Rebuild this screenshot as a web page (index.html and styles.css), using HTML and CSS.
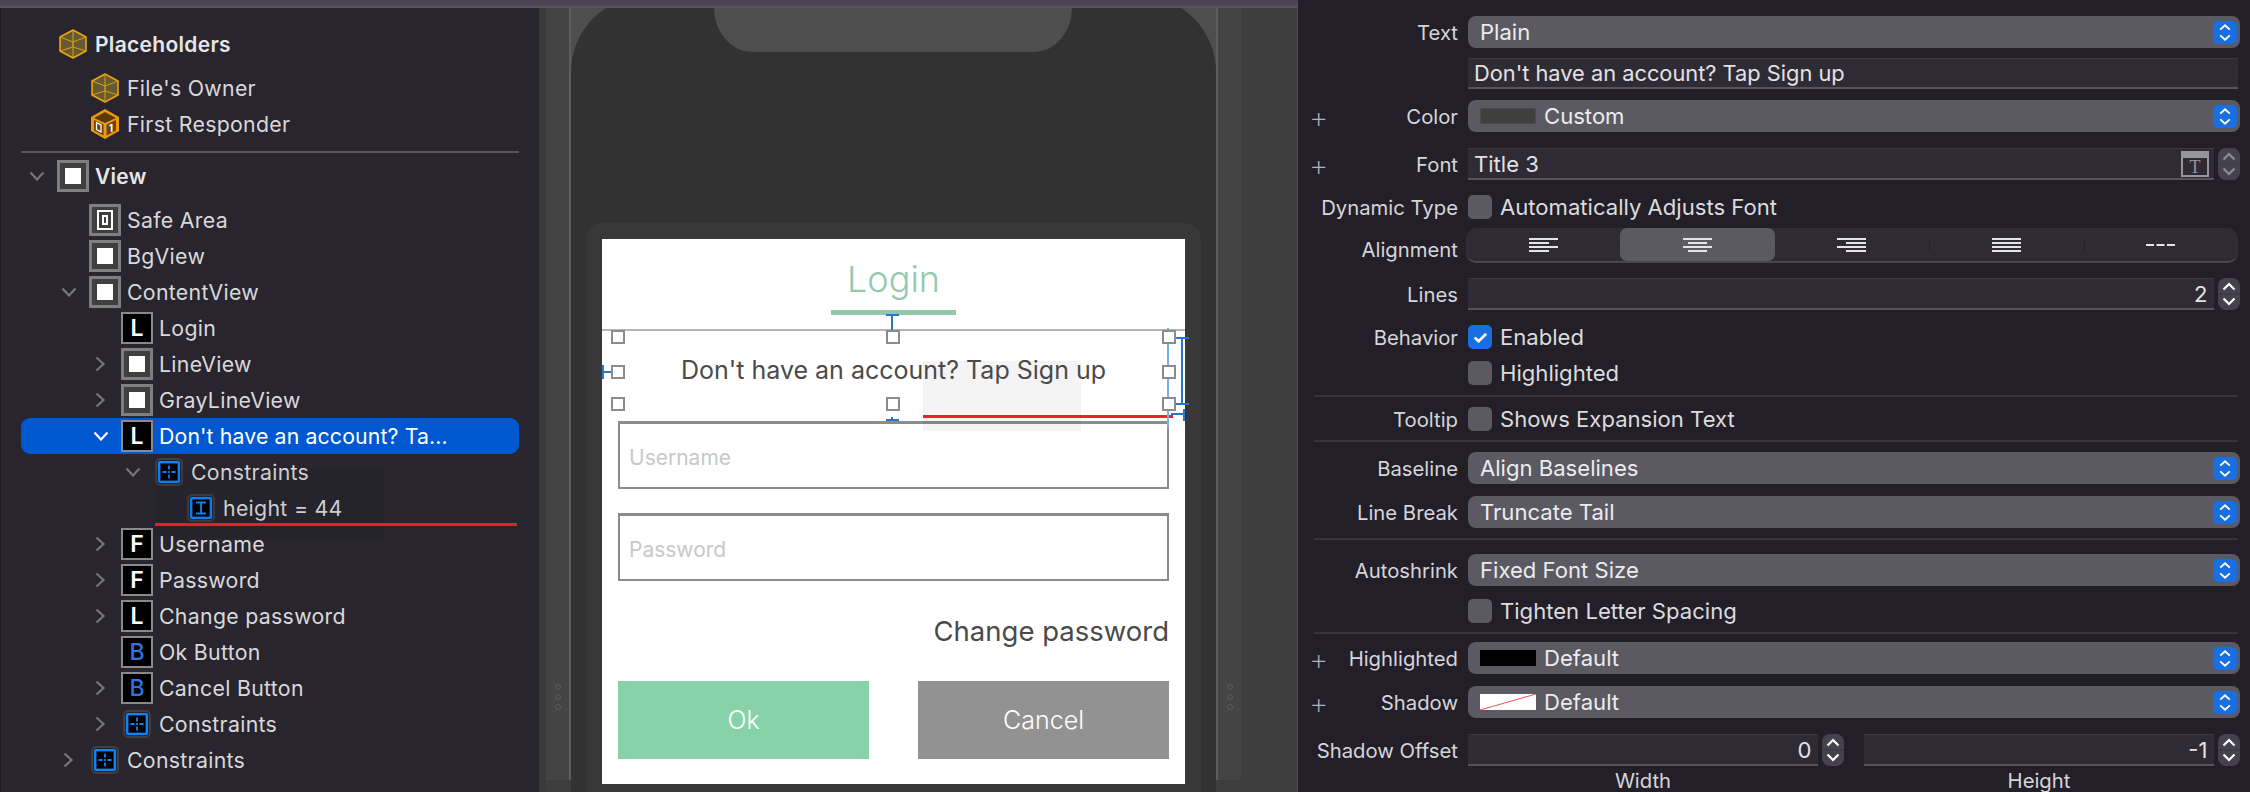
FILE: index.html
```html
<!DOCTYPE html>
<html lang="en">
<head>
<meta charset="utf-8">
<title>Interface Builder</title>
<link rel="stylesheet" href="styles.css">
</head>
<body>
<svg class="defs" width="0" height="0" aria-hidden="true">
  <symbol id="cube" viewBox="0 0 28 30">
    <path d="M14 1 27 8V22L14 29 1 22V8Z" fill="#665a34" stroke="#e8a60c" stroke-width="1.600" stroke-linejoin="round"/>
    <path d="M1 8 14 13 27 8M14 13V29M14 1V18M1 22 14 18 27 22" fill="none" stroke="#d89c12" stroke-width="1"/>
  </symbol>
  <symbol id="down" viewBox="0 0 16 10"><path d="M1.500 1.500 8 8.500 14.500 1.500" fill="none" stroke="currentColor" stroke-width="2.200"/></symbol>
  <symbol id="right" viewBox="0 0 16 16"><path d="M3.500 1.500 10.500 8 3.500 14.500" fill="none" stroke="currentColor" stroke-width="2.200"/></symbol>
  <symbol id="updown" viewBox="0 0 24 24"><path d="M7 9 12 4.500 17 9M7 15 12 19.500 17 15" fill="none" stroke="#fff" stroke-width="2"/></symbol>
  <symbol id="stepper" viewBox="0 0 22 32"><path d="M0 16H22" stroke="#37343d" stroke-width="1"/><path d="M5.500 11.500 11 6 16.500 11.500M5.500 20.500 11 26 16.500 20.500" fill="none" stroke="#fff" stroke-width="2.200"/></symbol>
  <symbol id="constraint" viewBox="0 0 22 22"><rect x="1.200" y="1.200" width="19.600" height="19.600" fill="#000" stroke="#0a84ff" stroke-width="2.400"/><path d="M11 4.500V8.500M11 10V12M11 13.500V17.500M4.500 11H8.500M13.500 11H17.500" stroke="#0a84ff" stroke-width="1.800"/></symbol>
  <symbol id="height" viewBox="0 0 22 22"><rect x="1.200" y="1.200" width="19.600" height="19.600" fill="#000" stroke="#0a84ff" stroke-width="2.400"/><path d="M6 5.500H16M6 16.500H16M11 5.500V16.500" fill="none" stroke="#0a84ff" stroke-width="1.900"/></symbol>
  <symbol id="align-l" viewBox="0 0 29 14"><path d="M0 1H29M0 5H20M0 9H29M0 13H20" stroke="#e4e4e6" stroke-width="2"/></symbol>
  <symbol id="align-c" viewBox="0 0 29 14"><path d="M0 1H29M5 5H24M0 9H29M5 13H24" stroke="#e4e4e6" stroke-width="2"/></symbol>
  <symbol id="align-r" viewBox="0 0 29 14"><path d="M0 1H29M9 5H29M0 9H29M9 13H29" stroke="#e4e4e6" stroke-width="2"/></symbol>
  <symbol id="align-j" viewBox="0 0 29 14"><path d="M0 1H29M0 5H29M0 9H29M0 13H29" stroke="#e4e4e6" stroke-width="2"/></symbol>
  <symbol id="align-n" viewBox="0 0 29 14"><path d="M0 7H8M10.500 7H18.500M21 7H29" stroke="#e4e4e6" stroke-width="2"/></symbol>
</svg>

<div class="app">
  <div class="workspace">
    <div class="strip"></div>
    <div class="panes">
      <nav class="outline">
        <div class="row lv0 bold head"><span class="chev"></span><svg class="ico cube"><use href="#cube"/></svg><span>Placeholders</span></div>
        <div class="row lv1 owner"><span class="chev"></span><svg class="ico cube"><use href="#cube"/></svg><span>File's Owner</span></div>
        <div class="row lv1"><span class="chev"></span>
          <svg class="ico cube" viewBox="0 0 28 30">
            <path d="M14 0 28 8V22L14 30 0 22V8Z" fill="#ef9a0b"/>
            <path d="M14 3 25 9 14 14 3 9Z" fill="#5b3b0c"/>
            <path d="M15.500 15.500 25 11V21.500L15.500 26.500Z" fill="#6b430d"/>
            <path d="M12.500 15.500 3 11V21.500L12.500 26.500Z" fill="#6b430d"/>
            <path d="M5.500 13.500 10 16V23L5.500 20.500Z" fill="none" stroke="#fff" stroke-width="1.300"/>
            <text x="20" y="23" class="one">1</text>
          </svg>
          <span>First Responder</span></div>
        <div class="sep"></div>
        <div class="row lv0 bold view"><svg class="chev"><use href="#down"/></svg><span class="ico box"><i class="fill"></i></span><span>View</span></div>
        <div class="row lv1"><span class="chev"></span><span class="ico box"><i class="safe-mark"><i></i></i></span><span>Safe Area</span></div>
        <div class="row lv1"><span class="chev"></span><span class="ico box"><i class="fill"></i></span><span>BgView</span></div>
        <div class="row lv1"><svg class="chev"><use href="#down"/></svg><span class="ico box"><i class="fill"></i></span><span>ContentView</span></div>
        <div class="row lv2"><span class="chev"></span><span class="ico glyph">L</span><span>Login</span></div>
        <div class="row lv2"><svg class="chev narrow"><use href="#right"/></svg><span class="ico box"><i class="fill"></i></span><span>LineView</span></div>
        <div class="row lv2"><svg class="chev narrow"><use href="#right"/></svg><span class="ico box"><i class="fill"></i></span><span>GrayLineView</span></div>
        <div class="row lv2 selected"><svg class="chev"><use href="#down"/></svg><span class="ico glyph">L</span><span>Don't have an account? Ta...</span></div>
        <div class="row lv3"><svg class="chev"><use href="#down"/></svg><span class="ico con"><svg><use href="#constraint"/></svg></span><span>Constraints</span></div>
        <div class="row lv4 marked"><span class="chev"></span><span class="ico con"><svg><use href="#height"/></svg></span><span>height = 44</span></div>
        <div class="row lv2"><svg class="chev narrow"><use href="#right"/></svg><span class="ico glyph">F</span><span>Username</span></div>
        <div class="row lv2"><svg class="chev narrow"><use href="#right"/></svg><span class="ico glyph">F</span><span>Password</span></div>
        <div class="row lv2"><svg class="chev narrow"><use href="#right"/></svg><span class="ico glyph">L</span><span>Change password</span></div>
        <div class="row lv2"><span class="chev"></span><span class="ico glyph blue">B</span><span>Ok Button</span></div>
        <div class="row lv2"><svg class="chev narrow"><use href="#right"/></svg><span class="ico glyph blue">B</span><span>Cancel Button</span></div>
        <div class="row lv2"><svg class="chev narrow"><use href="#right"/></svg><span class="ico con"><svg><use href="#constraint"/></svg></span><span>Constraints</span></div>
        <div class="row lv1"><svg class="chev narrow"><use href="#right"/></svg><span class="ico con"><svg><use href="#constraint"/></svg></span><span>Constraints</span></div>
      </nav>

      <main class="canvas">
        <div class="device">
          <span class="grip grip-l"><i></i><i></i><i></i></span>
          <span class="grip grip-r"><i></i><i></i><i></i></span>
          <div class="bezel">
            <div class="screen">
              <div class="notch"></div>
              <div class="popup">
                <section class="card">
                  <header class="title">
                    <h1>Login</h1>
                    <div class="underline"></div>
                  </header>
                  <div class="msg">
                    <div class="ghost"></div>
                    <p>Don't have an account? Tap Sign up</p>
                    <div class="red-mark"></div>
                    <svg class="guides" viewBox="0 0 583 114">
                      <path d="M290 1V16M284 1H297M290 103V106M284 106H297M1 51V65M1 58H9" fill="none" stroke="#2a76c6" stroke-width="2"/>
                      <path d="M566 14V114" stroke="#7bb0e6" stroke-width="2"/>
                      <path d="M580 24V90M574 24H587M568 90H587M582 95V107M569 100H582" fill="none" stroke="#2a76c6" stroke-width="2"/>
                    </svg>
                    <i class="handle h-tl"></i><i class="handle h-tc"></i><i class="handle h-tr"></i>
                    <i class="handle h-ml"></i><i class="handle h-mr"></i>
                    <i class="handle h-bl"></i><i class="handle h-bc"></i><i class="handle h-br"></i>
                  </div>
                  <div class="field">Username</div>
                  <div class="field second">Password</div>
                  <div class="change">Change password</div>
                  <div class="buttons">
                    <div class="btn ok">Ok</div>
                    <div class="btn cancel">Cancel</div>
                  </div>
                </section>
              </div>
            </div>
          </div>
        </div>
      </main>
    </div>
  </div>

  <aside class="inspector">
    <div class="irow at16"><div class="lab"><b></b>Text</div><div class="pop">Plain<svg class="pick"><use href="#updown"/></svg></div></div>
    <div class="irow short at10"><div class="lab"></div><div class="tf wide">Don't have an account? Tap Sign up</div></div>
    <div class="irow at11"><div class="lab"><b>+</b>Color</div><div class="pop"><i class="swatch custom"></i>Custom<svg class="pick"><use href="#updown"/></svg></div></div>
    <div class="irow at16"><div class="lab"><b>+</b>Font</div>
      <div class="ctl"><div class="tf grow">Title 3
        <svg class="font-ico" viewBox="0 0 28 26"><rect x="1" y="1" width="26" height="24" fill="none" stroke="#96959b" stroke-width="2"/><rect x="1" y="1" width="26" height="6" fill="#96959b"/><text x="14" y="22" class="t">T</text></svg></div>
        <span class="step dim"><svg><use href="#stepper"/></svg></span></div></div>
    <div class="irow chk at14"><div class="lab"><b></b>Dynamic Type</div><div class="ck"><i class="box-ck"></i>Automatically Adjusts Font</div></div>
    <div class="irow seg-row at10"><div class="lab"><b></b>Alignment</div>
      <div class="seg">
        <span class="cell"><svg><use href="#align-l"/></svg></span>
        <span class="cell on"><svg><use href="#align-c"/></svg></span>
        <span class="cell"><svg><use href="#align-r"/></svg></span>
        <span class="cell bar"><svg><use href="#align-j"/></svg></span>
        <span class="cell bar"><svg><use href="#align-n"/></svg></span>
      </div></div>
    <div class="irow at15"><div class="lab"><b></b>Lines</div>
      <div class="ctl"><div class="tf grow num">2</div><span class="step"><svg><use href="#stepper"/></svg></span></div></div>
    <div class="irow chk at14"><div class="lab"><b></b>Behavior</div><div class="ck"><i class="box-ck checked">✓</i>Enabled</div></div>
    <div class="irow chk at12"><div class="lab"></div><div class="ck"><i class="box-ck"></i>Highlighted</div></div>
    <div class="rule at11"></div>
    <div class="irow chk at9"><div class="lab"><b></b>Tooltip</div><div class="ck"><i class="box-ck"></i>Shows Expansion Text</div></div>
    <div class="rule at10"></div>
    <div class="irow at10"><div class="lab"><b></b>Baseline</div><div class="pop">Align Baselines<svg class="pick"><use href="#updown"/></svg></div></div>
    <div class="irow at12"><div class="lab"><b></b>Line Break</div><div class="pop">Truncate Tail<svg class="pick"><use href="#updown"/></svg></div></div>
    <div class="rule at10"></div>
    <div class="irow at14"><div class="lab"><b></b>Autoshrink</div><div class="pop">Fixed Font Size<svg class="pick"><use href="#updown"/></svg></div></div>
    <div class="irow chk at12"><div class="lab"></div><div class="ck"><i class="box-ck"></i>Tighten Letter Spacing</div></div>
    <div class="rule at10"></div>
    <div class="irow at8"><div class="lab"><b>+</b>Highlighted</div><div class="pop"><i class="swatch black"></i>Default<svg class="pick"><use href="#updown"/></svg></div></div>
    <div class="irow at12"><div class="lab"><b>+</b>Shadow</div><div class="pop"><svg class="swatch" viewBox="0 0 56 16" preserveAspectRatio="none"><rect width="56" height="16" fill="#fff"/><path d="M0 16 56 0" stroke="#f0524f" stroke-width="1"/></svg>Default<svg class="pick"><use href="#updown"/></svg></div></div>
    <div class="irow at16"><div class="lab"><b></b>Shadow Offset</div>
      <div class="ctl pair">
        <div class="half"><div class="tf grow num">0</div><span class="step"><svg><use href="#stepper"/></svg></span></div>
        <div class="half"><div class="tf grow num">-1</div><span class="step"><svg><use href="#stepper"/></svg></span></div>
      </div></div>
    <div class="irow caps"><div class="lab"></div>
      <div class="ctl pair"><div class="cap">Width</div><div class="cap">Height</div></div></div>
  </aside>
</div>
</body>
</html>
```
FILE: styles.css
```css
* { box-sizing: border-box; }
html, body { margin: 0; padding: 0; background: #221f29; }
body { font-family: Inter, "Liberation Sans", sans-serif; }
.defs { position: absolute; }
i { font-style: normal; }

.app { display: flex; width: 2250px; height: 792px; overflow: hidden; }
.workspace { width: 1297px; flex: none; display: flex; flex-direction: column; }
.strip { position: relative; z-index: 2; height: 8px; flex: none; background: #4a4553; border-bottom: 2px solid #57535f; }
.panes { display: flex; flex: 1; min-height: 0; }

/* outline */
.outline { width: 539px; flex: none; background: #28252e; border-left: 1px solid #1c1a20; padding: 20px 20px 0 20px; font-size: 21.300px; letter-spacing: .3px; }
.row { display: flex; align-items: center; height: 36px; border-radius: 9px; color: #d9d8db; }
.row > span:last-child { margin-left: 6px; white-space: nowrap; }
.lv0 { padding-left: 8px; }
.lv1 { padding-left: 40px; }
.lv2 { padding-left: 72px; }
.lv3 { padding-left: 104px; }
.lv4 { padding-left: 136px; }
.chev { width: 16px; height: 10px; flex: none; margin-right: 12px; color: #77767b; overflow: visible; }
.chev.narrow { height: 16px; }
.bold { font-weight: 600; color: #e6e6e8; font-size: 21px; }
.head { height: 32px; }
.owner { margin-top: 10px; }
.sep { height: 2px; background: #57555c; margin: 9px 0 5px 0; }
.view { margin-bottom: 8px; }
.ico { width: 32px; height: 32px; flex: none; display: flex; align-items: center; justify-content: center; }
.cube { padding: 0 2px; overflow: visible; }
.one { font: 700 10px Inter, sans-serif; fill: #fff; text-anchor: middle; }
.box { background: #3f3f41; border: 3px solid #7f7f80; }
.fill { width: 16px; height: 16px; background: #fff; }
.safe-mark { width: 16px; height: 20px; border: 2px solid #fff; display: flex; align-items: center; justify-content: center; }
.safe-mark i { width: 6px; height: 10px; border: 2px solid #fff; }
.glyph { background: #000; border: 2.500px solid #8a8a8b; color: #fff; font-size: 23px; font-weight: 600; letter-spacing: 0; }
.glyph.blue { color: #2f73e0; font-weight: 500; }
.con svg { width: 22px; height: 22px; outline: 2px solid #3f3f41; outline-offset: 1px; border-radius: 2px; }
.selected { background: #0058d0; color: #fff; letter-spacing: .12px; }
.selected .chev { color: #fff; }
.marked { position: relative; }
.marked::before { content: ""; position: absolute; left: 134px; top: -20px; bottom: -12px; width: 229px; background: rgba(0,0,0,.05); }
.marked::after { content: ""; position: absolute; left: 134px; right: 2px; bottom: 0; height: 3px; background: #e3202b; }

/* canvas */
.canvas { flex: 1; background: #3e3e3e; border-left: 7px solid #3a3a3a; padding-right: 56px; min-width: 0; }
.device { position: relative; height: 100%; background: #444; padding: 0 23px; }
.grip { position: absolute; top: 688px; display: flex; flex-direction: column; gap: 4px; }
.grip i { width: 6px; height: 6px; border: 1px solid #5c5c5c; border-radius: 50%; }
.grip-l { left: 9px; }
.grip-r { right: 8px; }
.bezel { height: 100%; background: #4e4e4e; border-left: 2px solid #5e5e5e; border-right: 2px solid #5e5e5e; }
.screen { height: calc(100% + 12px); margin-top: -12px; background: #323232; border-radius: 76px 76px 0 0; display: flex; flex-direction: column; }
.notch { width: 358px; height: 56px; margin: 0 auto; background: #4e4e4e; border-radius: 0 0 38px 38px / 0 0 44px 44px; flex: none; position: relative; left: -1px; }
.popup { flex: 1; margin: 171px 15px 0 15px; padding: 16px 16px 8px 16px; background: #383838; border-radius: 16px 16px 0 0; }

.card { height: 545px; background: #fff; color: #4a4a4a; display: flex; flex-direction: column; }
.title { height: 92px; flex: none; border-bottom: 2px solid #b5b5b5; display: flex; flex-direction: column; align-items: center; }
.title h1 { margin: 18px 0 0 0; font-size: 36px; line-height: 44px; font-weight: 300; color: #93c9ac; }
.underline { width: 125px; height: 5px; margin-top: 9px; background: #92c9ab; }
.msg { position: relative; height: 67px; margin: 6px 16px 17px 16px; display: flex; justify-content: center; }
.msg p { position: relative; margin: 18px 0 0 0; font-size: 25px; line-height: 30px; white-space: nowrap; }
.ghost { position: absolute; left: 305px; top: 24px; width: 158px; height: 70px; background: rgba(0,0,0,.045); }
.red-mark { position: absolute; left: 305px; top: 78px; width: 250px; height: 3px; background: #f0202a; }
.guides { position: absolute; left: -16px; top: -23px; width: 583px; height: 114px; overflow: visible; }
.handle { position: absolute; width: 14px; height: 14px; margin: -7px 0 0 -7px; background: #fff; border: 2.500px solid #8c8c8c; }
.h-tl { left: 0; top: 0; }
.h-tc { left: calc(50% - 1px); top: 0; }
.h-tr { left: 100%; top: 0; }
.h-ml { left: 0; top: 35px; }
.h-mr { left: 100%; top: 35px; }
.h-bl { left: 0; top: 100%; }
.h-bc { left: calc(50% - 1px); top: 100%; }
.h-br { left: 100%; top: 100%; }
.field { height: 68px; margin: 0 16px; flex: none; border: 2px solid #8c8c8c; border-top-width: 3px; color: #c8c8c8; font-size: 21px; display: flex; align-items: center; padding: 4px 0 0 9px; }
.second { margin-top: 24px; }
.change { height: 100px; flex: none; margin: 0 16px; display: flex; align-items: center; justify-content: flex-end; font-size: 27.500px; }
.buttons { display: flex; justify-content: space-between; margin: 0 16px; }
.btn { width: 251px; height: 78px; display: flex; align-items: center; justify-content: center; color: #fff; font-size: 25px; font-weight: 300; }
.ok { background: #88d2a9; }
.cancel { background: #929292; }

/* inspector */
.inspector { flex: 1; background: #221f29; border-left: 1px solid #4b4852; padding-right: 10px; color: #dcdbde; font-size: 22.100px; }
.irow { display: grid; grid-template-columns: 160px 1fr; column-gap: 10px; align-items: center; height: 32px; }
.short { height: 31px; }
.short .tf { height: 31px; font-size: 21.800px; }
.lab { display: flex; justify-content: space-between; align-items: center; padding: 1px 0 0 11px; white-space: nowrap; color: #d6d5d9; font-size: 20.300px; }
.lab b { width: 14px; font-weight: 200; font-size: 30px; line-height: 20px; color: #b5b4b9; }
.lab:empty { padding: 0; }
.at8 { margin-top: 8px; } .at9 { margin-top: 9px; } .at10 { margin-top: 10px; } .at11 { margin-top: 11px; } .at12 { margin-top: 12px; }
.at14 { margin-top: 14px; } .at15 { margin-top: 15px; } .at16 { margin-top: 16px; }
.pop { position: relative; display: flex; align-items: center; height: 32px; padding-left: 12px; background: #5b5962; border-radius: 8px; color: #ececee; white-space: nowrap; }
.pick { position: absolute; right: 3px; top: 5px; width: 24px; height: 23px; background: #1a6fe0; border-radius: 5px; }
.swatch { width: 56px; height: 16px; margin-right: 8px; flex: none; display: block; }
.swatch.custom { background: #3f3f3f; border: 1px solid #4b4b4b; }
.swatch.black { background: #000; }
.tf { display: flex; align-items: center; height: 32px; padding-left: 6px; background: #2e2b35; border-top: 1px solid #3a373f; border-bottom: 2px solid #56535d; color: #e2e1e4; white-space: nowrap; }
.wide { margin-right: 2px; }
.ctl { display: flex; align-items: center; }
.grow { flex: 1; min-width: 0; position: relative; }
.num { justify-content: flex-end; padding: 0 6px 0 0; }
.step { width: 22px; height: 32px; flex: none; margin-left: 4.500px; background: #45424d; border-radius: 8px; display: flex; align-items: center; }
.step svg { width: 22px; height: 32px; }
.step.dim svg { opacity: .4; }
.font-ico { position: absolute; right: 5px; top: 2px; width: 28px; height: 26px; }
.t { font: 400 18px "Liberation Serif", serif; fill: #96959b; text-anchor: middle; }
.chk { height: 24px; }
.ck { display: flex; align-items: center; color: #dcdbde; white-space: nowrap; }
.box-ck { width: 24px; height: 24px; margin-right: 8px; flex: none; background: #5b5962; border-radius: 5px; display: flex; align-items: center; justify-content: center; color: #fff; font-size: 18px; font-weight: 700; }
.checked { background: #1a6fe0; }
.seg-row { height: 35px; }
.seg-row .lab { padding-top: 7px; }
.seg { display: grid; grid-template-columns: repeat(5, 1fr); height: 35px; margin: 0 2px 0 -2px; background: #2e2b35; border-radius: 10px; border-bottom: 2px solid #4a4751; }
.cell { display: flex; align-items: center; justify-content: center; position: relative; border-radius: 7px; }
.cell svg { width: 29px; height: 14px; }
.on { background: #5b5962; }
.bar::before { content: ""; position: absolute; left: 0; top: 10px; bottom: 10px; width: 1px; background: #24212a; }
.rule { height: 2px; margin-left: 16px; margin-right: 2px; background: #37343d; }
.pair { gap: 20px; }
.half { display: flex; align-items: center; flex: 1; min-width: 0; }
.caps { height: 20px; margin-top: 5px; }
.caps .cap { flex: 1; text-align: center; padding-right: 26px; color: #d6d5d9; font-size: 20.300px; line-height: 20px; }
```
